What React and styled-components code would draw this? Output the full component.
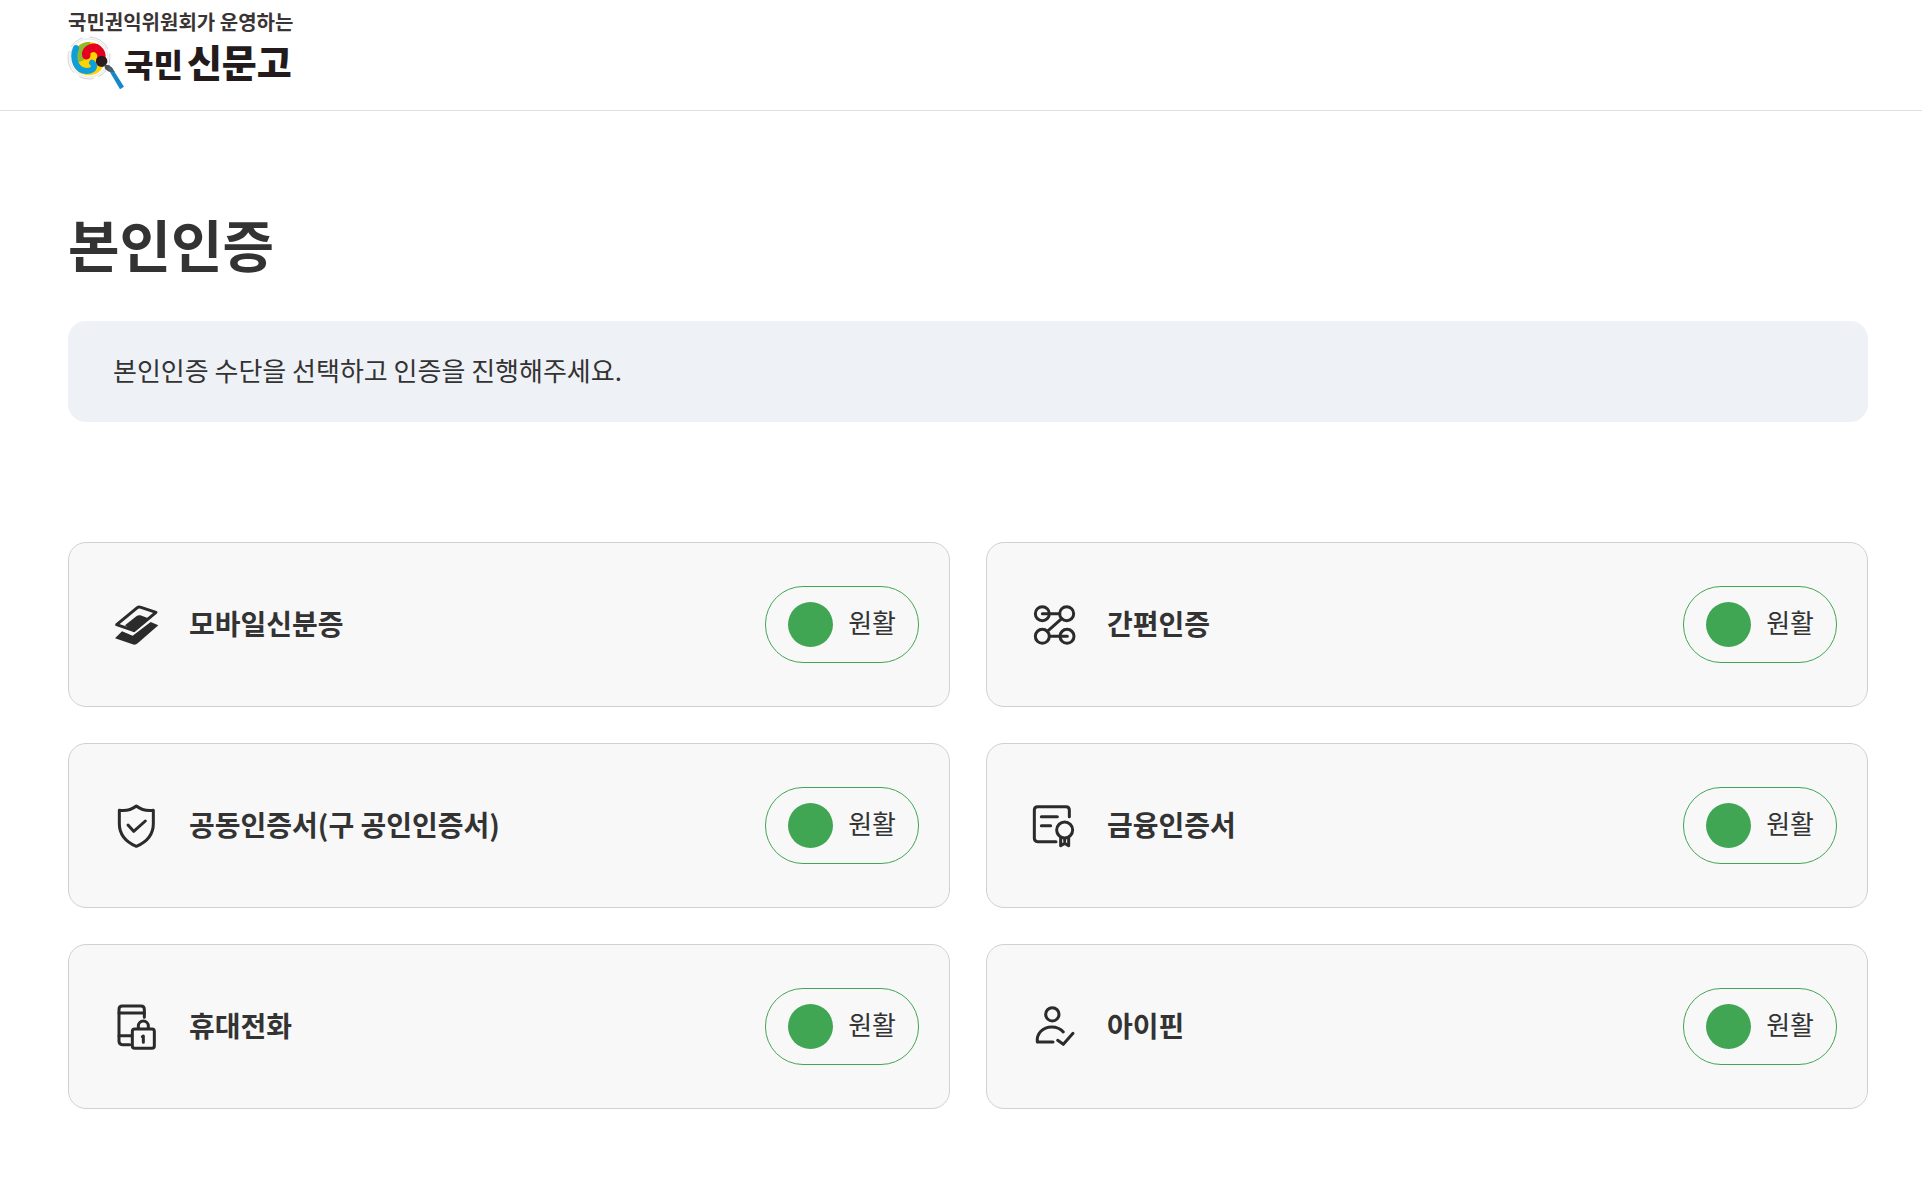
import styled, { createGlobalStyle } from "styled-components";

const methods = [
    {id: 'mobile', name: '모바일신분증', icon: <IdCardIcon/>},
    {id: 'simple', name: '간편인증', icon: <PatternIcon/>},
    {id: 'joint', name: '공동인증서(구 공인인증서)', icon: <ShieldIcon/>},
    {id: 'finance', name: '금융인증서', icon: <CertificateIcon/>},
    {id: 'phone', name: '휴대전화', icon: <PhoneLockIcon/>},
    {id: 'ipin', name: '아이핀', icon: <UserCheckIcon/>},
];

function App(){
    return(
    <>
        <GlobalStyle />
        <Header />
        <Main>
            <Title>본인인증</Title>
            <Notice>본인인증 수단을 선택하고 인증을 진행해주세요.</Notice>
            <MethodList>
                {methods.map(method => <Method key={method.id} name={method.name} icon={method.icon}/>)}
            </MethodList>
        </Main>
    </>
    )
}

function Header(){
    return(
        <Top>
            <Logo href="#">
                <Operator>국민권익위원회가 운영하는</Operator>
                <Brand>
                    <Emblem />
                    <BrandName><small>국민</small>신문고</BrandName>
                </Brand>
            </Logo>
        </Top>
    )
}

function Method({name, icon}){
    return(
        <li>
            <MethodButton type="button">
                {icon}
                <MethodName>{name}</MethodName>
                <Status>
                    <Light />
                    <StatusText>원활</StatusText>
                </Status>
            </MethodButton>
        </li>
    )
}

function Emblem(){
    return(
        <EmblemSvg viewBox="0 0 186 180" fill="none" aria-hidden="true">
            <circle cx="69" cy="72" r="63" stroke="#d3d3d3" strokeWidth="3" strokeDasharray="70 14 44 20"/>
            <circle cx="69" cy="72" r="57" stroke="#ececec" strokeWidth="4"/>
            <circle cx="68" cy="74" r="50" fill="#ffd400"/>
            <path d="M72 34C44 34 34 56 44 82" stroke="#8fb92e" strokeWidth="22"/>
            <path d="M30 42C16 76 32 112 64 111C84 110 90 96 78 86" stroke="#0d9fdb" strokeWidth="18" strokeLinecap="round"/>
            <path d="M61 64C56 46 84 34 98 48C109 58 108 72 102 82" stroke="#e50020" strokeWidth="25" strokeLinecap="round"/>
            <circle cx="107" cy="82" r="17" fill="#2a1d1d"/>
            <path d="M114 92L130 94L140 104L130 114L118 106Z" fill="#4b4d55"/>
            <path d="M126 104L137 100L174 158L162 166Z" fill="#1688c9"/>
            <path d="M124 100L137 100L146 114L132 114Z" fill="#49606f"/>
        </EmblemSvg>
    )
}

function IdCardIcon(){
    return(
        <Icon viewBox="0 0 138 138">
            <path d="M11 68L73 17Q77 14 84 16L129 31L63 86Z"/>
            <path className="solid" d="M36 70L70 43Q76 38 82 40L104 48L120 42L63 90Z"/>
            <path className="solid" d="M27 88L59 101L113 60L136 70L74 124Q67 130 59 127L6 109Z"/>
        </Icon>
    )
}

function PatternIcon(){
    return(
        <Icon viewBox="0 0 138 138">
            <circle cx="34" cy="35" r="21"/>
            <circle cx="107" cy="35" r="21"/>
            <circle cx="34" cy="103" r="21"/>
            <circle cx="108" cy="103" r="21"/>
            <path d="M34 35H86M92 50L49 88M55 103H109"/>
        </Icon>
    )
}

function ShieldIcon(){
    return(
        <Icon viewBox="0 0 138 138">
            <path d="M70 9C56 20 40 25 19 22V62C19 96 42 118 70 130C98 118 121 96 121 62V22C100 25 84 20 70 9Z"/>
            <path d="M45 66L62 85L97 54"/>
        </Icon>
    )
}

function CertificateIcon(){
    return(
        <Icon viewBox="0 0 138 138">
            <path d="M115 41V21Q115 11 105 11H20Q10 11 10 21V106Q10 116 20 116H75"/>
            <path d="M31 41H79M31 68H59"/>
            <circle cx="101" cy="81" r="24"/>
            <path d="M89 103V128L101 121L113 128V103"/>
            <path d="M101 108V114"/>
        </Icon>
    )
}

function PhoneLockIcon(){
    return(
        <Icon viewBox="0 0 138 138">
            <path d="M94 40V16Q94 6 84 6H28Q18 6 18 16V112Q18 122 28 122H50"/>
            <path d="M18 27H94M18 95H54"/>
            <rect x="58" y="75" width="66" height="58" rx="7"/>
            <path d="M76 73V66A15 15 0 0 1 106 66V73"/>
            <path d="M88 98L91 96V115"/>
        </Icon>
    )
}

function UserCheckIcon(){
    return(
        <Icon viewBox="0 0 138 138">
            <circle cx="64" cy="31" r="20"/>
            <path d="M66 114H19C16 88 36 69 62 69C77 69 89 75 97 84"/>
            <path d="M80 109L97 121L126 88"/>
        </Icon>
    )
}

const GlobalStyle = createGlobalStyle`
    *{
        box-sizing: border-box;
    }
    body{
        margin: 0;
        background-color: #FFFFFF;
        color: #333333;
        font-family: 'Noto Sans CJK KR', 'Noto Sans', sans-serif;
    }
`
const Top = styled.header`
    padding: 8px 54px 18px 68px;
    border-bottom: 1px solid #E0E0E0;
`
const Logo = styled.a`
    display: inline-flex;
    flex-direction: column;
    color: #231B1B;
    text-decoration: none;
`
const Operator = styled.span`
    color: #3B3434;
    font-size: 20px;
    font-weight: 700;
    line-height: 28px;
`
const Brand = styled.span`
    display: flex;
    align-items: center;
    height: 56px;
`
const EmblemSvg = styled.svg`
    width: 62px;
    height: 60px;
    margin-left: -2px;
`
const BrandName = styled.span`
    margin-left: -4px;
    padding-bottom: 4px;
    font-size: 38px;
    font-weight: 900;
    line-height: 52px;

    small{
        margin-right: 4px;
        font-size: 32px;
    }
`
const Main = styled.main`
    padding: 92px 54px 84px 68px;
`
const Title = styled.h1`
    margin: 0;
    font-size: 56px;
    font-weight: 700;
    line-height: 80px;
`
const Notice = styled.p`
    margin: 38px 0 120px;
    padding: 28px 45px 32px;
    border-radius: 18px;
    background-color: #EEF1F6;
    font-size: 26px;
    line-height: 41px;
`
const MethodList = styled.ul`
    display: grid;
    grid-template-columns: 1fr 1fr;
    gap: 36px;
    margin: 0;
    padding: 0;
    list-style: none;
`
const MethodButton = styled.button`
    display: flex;
    align-items: center;
    width: 100%;
    padding: 43px 30px 43px 44px;
    border: 1px solid #CDD1D5;
    border-radius: 18px;
    background-color: #F8F8F8;
    color: #333333;
    font-family: inherit;
    text-align: left;
    cursor: pointer;
`
const Icon = styled.svg.attrs({'aria-hidden': true})`
    flex-shrink: 0;
    width: 46px;
    height: 46px;
    fill: none;
    stroke: #2B2B2B;
    stroke-width: 9;
    stroke-linecap: round;
    stroke-linejoin: round;

    .solid{
        fill: #2B2B2B;
        stroke: none;
    }
`
const MethodName = styled.span`
    flex: 1;
    margin-left: 30px;
    padding-bottom: 3px;
    font-size: 28px;
    font-weight: 700;
    line-height: 42px;
`
const Status = styled.span`
    display: flex;
    align-items: center;
    gap: 15px;
    padding: 15px 22px;
    border: 1px solid #43A654;
    border-radius: 38px;
`
const StatusText = styled.span`
    padding-bottom: 5px;
    font-size: 26px;
    line-height: 38px;
`
const Light = styled.span`
    width: 45px;
    height: 45px;
    border-radius: 50%;
    background-color: #40A653;
`

export default App;
